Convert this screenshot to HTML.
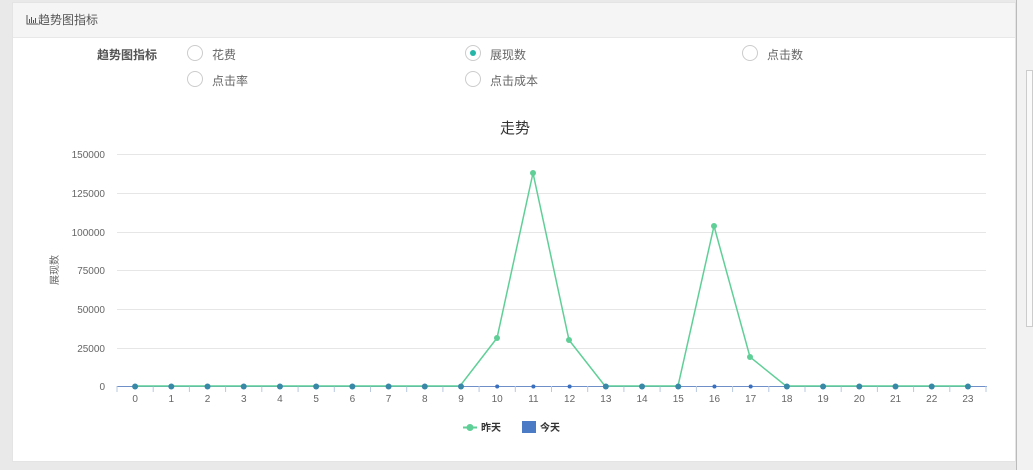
<!DOCTYPE html>
<html><head><meta charset="utf-8"><style>
body{margin:0;width:1033px;height:470px;background:#e9e9e9;position:relative;overflow:hidden;font-family:"Liberation Sans","Noto Sans CJK SC",sans-serif}
.panel{position:absolute;left:12px;top:2px;width:1004px;height:460px;background:#fff;border:1px solid #e4e4e4;box-sizing:border-box}
.hd{height:34px;background:#f5f5f5;border-bottom:1px solid #e8e8e8;font-size:12px;color:#555;line-height:34px;padding-left:13px}
.lbl{position:absolute;font-size:12px;color:#666}
.r{position:absolute;width:16px;height:16px;border:1px solid #ccc;border-radius:50%;box-sizing:border-box;background:#fff}
.r.on::after{content:"";position:absolute;left:4px;top:4px;width:6px;height:6px;border-radius:50%;background:#26b6a8}
.side{position:absolute;left:1016px;top:0;width:17px;height:470px;background:#f2f2f2;border-left:1px solid #bbb}
.sb{position:absolute;left:1026px;top:70px;width:5px;height:255px;border:1px solid #ccc;background:#fafafa}
</style></head><body>
<div class="panel"><div class="hd"><svg width="12" height="11" style="vertical-align:-1px"><path d="M1 1V10H12" stroke="#555" fill="none"/><path d="M3.5 5v4M5.5 3v6M7.5 6v3M9.5 4v5" stroke="#555"/></svg>趋势图指标</div></div>
<div class="side"></div><div class="sb"></div>
<div class="lbl" style="left:97px;top:46px;font-weight:bold;color:#555">趋势图指标</div>
<div class="r" style="left:187px;top:45px"></div><div class="lbl" style="left:212px;top:46px">花费</div>
<div class="r on" style="left:465px;top:45px"></div><div class="lbl" style="left:490px;top:46px">展现数</div>
<div class="r" style="left:742px;top:45px"></div><div class="lbl" style="left:767px;top:46px">点击数</div>
<div class="r" style="left:187px;top:71px"></div><div class="lbl" style="left:212px;top:72px">点击率</div>
<div class="r" style="left:465px;top:71px"></div><div class="lbl" style="left:490px;top:72px">点击成本</div>
<svg style="position:absolute;left:0;top:0" width="1016" height="470" font-family="Liberation Sans, Noto Sans CJK SC, sans-serif">
<text x="515" y="133" font-size="15" fill="#333" text-anchor="middle">走势</text>
<g stroke="#e6e6e6"><line x1="117" x2="986" y1="154.5" y2="154.5"/><line x1="117" x2="986" y1="193.5" y2="193.5"/><line x1="117" x2="986" y1="232.5" y2="232.5"/><line x1="117" x2="986" y1="270.5" y2="270.5"/><line x1="117" x2="986" y1="309.5" y2="309.5"/><line x1="117" x2="986" y1="348.5" y2="348.5"/></g>
<g font-size="10" fill="#666" text-anchor="end"><text x="105" y="158">150000</text><text x="105" y="197">125000</text><text x="105" y="236">100000</text><text x="105" y="274">75000</text><text x="105" y="313">50000</text><text x="105" y="352">25000</text><text x="105" y="390">0</text></g>
<text transform="translate(58,270) rotate(-90)" font-size="10" fill="#666" text-anchor="middle">展现数</text>
<line x1="117" x2="987" y1="386.5" y2="386.5" stroke="#6e8fc8"/>
<g id="ticks" stroke="#aac" ></g>
<path id="tk" stroke="#b8c8e0" fill="none" d=""/>
<g id="xl" font-size="10" fill="#666" text-anchor="middle"></g>
<polyline fill="none" stroke="#5fcf97" stroke-width="1.5" points="135,386 460,386 497,338 533,173 569,340 605,386 678,386 714,226 750,357 786,386 967,386"/>
<g fill="#5fcf97"><circle cx="497" cy="338" r="3"/><circle cx="533" cy="173" r="3"/><circle cx="569" cy="340" r="3"/><circle cx="714" cy="226" r="3"/><circle cx="750" cy="357" r="3"/></g>
<g id="dots"></g>
<g font-size="10" font-weight="bold" fill="#333"><line x1="463" x2="477" y1="427.5" y2="427.5" stroke="#5fcf97" stroke-width="2"/><circle cx="470" cy="427.5" r="3.5" fill="#5fcf97"/><text x="481" y="431">昨天</text><rect x="522" y="421" width="14" height="12" fill="#4a7bc4"/><text x="540" y="431">今天</text></g>
</svg>
<script>
var ns="http://www.w3.org/2000/svg",d="",xl=document.getElementById("xl"),dots=document.getElementById("dots");
for(var i=0;i<=24;i++){var x=117+i*36.21;d+="M"+x.toFixed(1)+" 386V392";}
document.getElementById("tk").setAttribute("d",d);
var g={10:1,11:1,12:1,16:1,17:1};
for(var i=0;i<24;i++){var x=135.1+i*36.21;var t=document.createElementNS(ns,"text");t.setAttribute("x",x);t.setAttribute("y",402);t.textContent=i;xl.appendChild(t);
var c=document.createElementNS(ns,"circle");c.setAttribute("cx",x);c.setAttribute("cy",386.5);c.setAttribute("r",g[i]?2:3);c.setAttribute("fill",g[i]?"#3a6fc0":"#3a88a8");dots.appendChild(c);}
</script>
</body></html>
